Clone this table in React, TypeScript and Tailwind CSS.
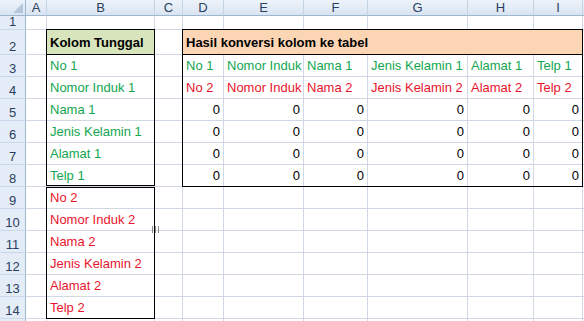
import React from 'react'

const COLS = ['A', 'B', 'C', 'D', 'E', 'F', 'G', 'H', 'I', '']
const GREEN = 'text-[#12a650]'
const RED = 'text-[#e8142c]'

const firstSet = ['No 1', 'Nomor Induk 1', 'Nama 1', 'Jenis Kelamin 1', 'Alamat 1', 'Telp 1']
const secondSet = ['No 2', 'Nomor Induk 2', 'Nama 2', 'Jenis Kelamin 2', 'Alamat 2', 'Telp 2']
const tableHead1 = ['No 1', 'Nomor Induk', 'Nama 1', 'Jenis Kelamin 1', 'Alamat 1', 'Telp 1']
const tableHead2 = ['No 2', 'Nomor Induk', 'Nama 2', 'Jenis Kelamin 2', 'Alamat 2', 'Telp 2']

type CellSpec = { text?: string; color?: string; right?: boolean }

// content of a sheet cell, row is 1-based, col is 0-based (0 = A)
function cellAt(row: number, col: number): CellSpec {
  if (col === 1) {
    if (row >= 3 && row <= 8) return { text: firstSet[row - 3], color: GREEN }
    if (row >= 9 && row <= 14) return { text: secondSet[row - 9], color: RED }
  }
  if (col >= 3 && col <= 8) {
    if (row === 3) return { text: tableHead1[col - 3], color: GREEN }
    if (row === 4) return { text: tableHead2[col - 3], color: RED }
    if (row >= 5 && row <= 8) return { text: '0', right: true }
  }
  return {}
}

// grid track of a sheet cell (header row/column take track 1)
const at = (row: number, col: number, span = 1) => ({
  gridRow: row + 1,
  gridColumn: `${col + 2} / span ${span}`,
})

export default function App() {
  const rows = Array.from({ length: 15 }, (_, i) => i + 1)

  return (
    <div
      className="h-[321px] w-[584px] overflow-hidden bg-white text-[13px] leading-[15px]"
      style={{ fontFamily: '"Liberation Sans", Arial, sans-serif' }}
    >
      <div className="grid grid-cols-[26px_21px_108px_28px_41px_80px_64px_100px_66px_49px_1fr] grid-rows-[16px_14px_25px_repeat(12,22px)_22px]">
        {/* corner */}
        <div className="col-start-1 row-start-1 flex items-end justify-end border-r border-b border-[#9eb6ce] bg-gradient-to-b from-[#eef3fa] to-[#d9e4f2] pb-[2px] pr-[2px]">
          <svg width="10" height="10" viewBox="0 0 10 10">
            <path d="M10 0 L10 10 L0 10 Z" fill="#b4c6dc" />
          </svg>
        </div>

        {/* column headers */}
        {COLS.map((c, i) => (
          <div
            key={`h-${i}`}
            style={{ gridRow: 1, gridColumn: i + 2 }}
            className="flex items-center justify-center border-r border-b border-r-[#c3d3e6] border-b-[#9eb6ce] bg-gradient-to-b from-[#eef3fa] to-[#d9e4f2] text-[13px] text-[#2b4060]"
          >
            {c}
          </div>
        ))}

        {rows.map((r) => (
          <React.Fragment key={r}>
            <div
              style={{ gridRow: r + 1, gridColumn: 1 }}
              className="flex items-end justify-center border-r border-b border-r-[#9eb6ce] border-b-[#c9d8ea] bg-[#e4ecf7] text-[13px] text-[#2b4060]"
            >
              {r < 15 ? r : ''}
            </div>
            {COLS.map((_, ci) => {
              if (r === 2 && ci === 1) {
                return (
                  <div key={ci} style={at(r, ci)} className="flex items-center whitespace-nowrap border-r border-b border-[#d0d7e5] bg-[#d8e4bc] px-[3px] font-bold text-black">
                    Kolom Tunggal
                  </div>
                )
              }
              if (r === 2 && ci === 3) {
                return (
                  <div key={ci} style={at(r, ci, 6)} className="flex items-center whitespace-nowrap border-r border-b border-[#d0d7e5] bg-[#fcd5b4] px-[3px] font-bold text-black">
                    Hasil konversi kolom ke tabel
                  </div>
                )
              }
              if (r === 2 && ci > 3 && ci <= 8) return null
              const spec = cellAt(r, ci)
              return (
                <div
                  key={ci}
                  style={at(r, ci)}
                  className={`relative flex items-center whitespace-nowrap border-r border-b border-[#d0d7e5] px-[3px] ${
                    spec.right ? 'justify-end' : ''
                  } ${spec.color ?? 'text-black'}`}
                >
                  {spec.text}
                </div>
              )
            })}
          </React.Fragment>
        ))}

        {/* cell borders drawn over the grid */}
        <div className="pointer-events-none relative z-10 col-start-3 row-start-3 -ml-px -mt-px border border-black" />
        <div className="pointer-events-none relative z-10 col-start-3 row-start-4 row-end-10 -ml-px -mt-px mb-px border border-black" />
        <div className="pointer-events-none relative z-10 col-start-3 row-start-10 row-end-16 -ml-px border border-black">
          {/* column resize cursor left on the B|C edge */}
          <svg className="absolute right-[-5px] top-[38px]" width="7" height="7" viewBox="0 0 7 7">
            <path d="M0.5 0 V7 M3.5 0 V7 M6.5 0 V7" stroke="#8a8a8a" strokeWidth="1" />
          </svg>
        </div>
        <div className="pointer-events-none relative z-10 col-start-5 col-end-11 row-start-3 -ml-px -mt-px border border-black" />
        <div className="pointer-events-none relative z-10 col-start-5 col-end-11 row-start-3 row-end-10 -ml-px -mt-px border border-black" />
      </div>
    </div>
  )
}
